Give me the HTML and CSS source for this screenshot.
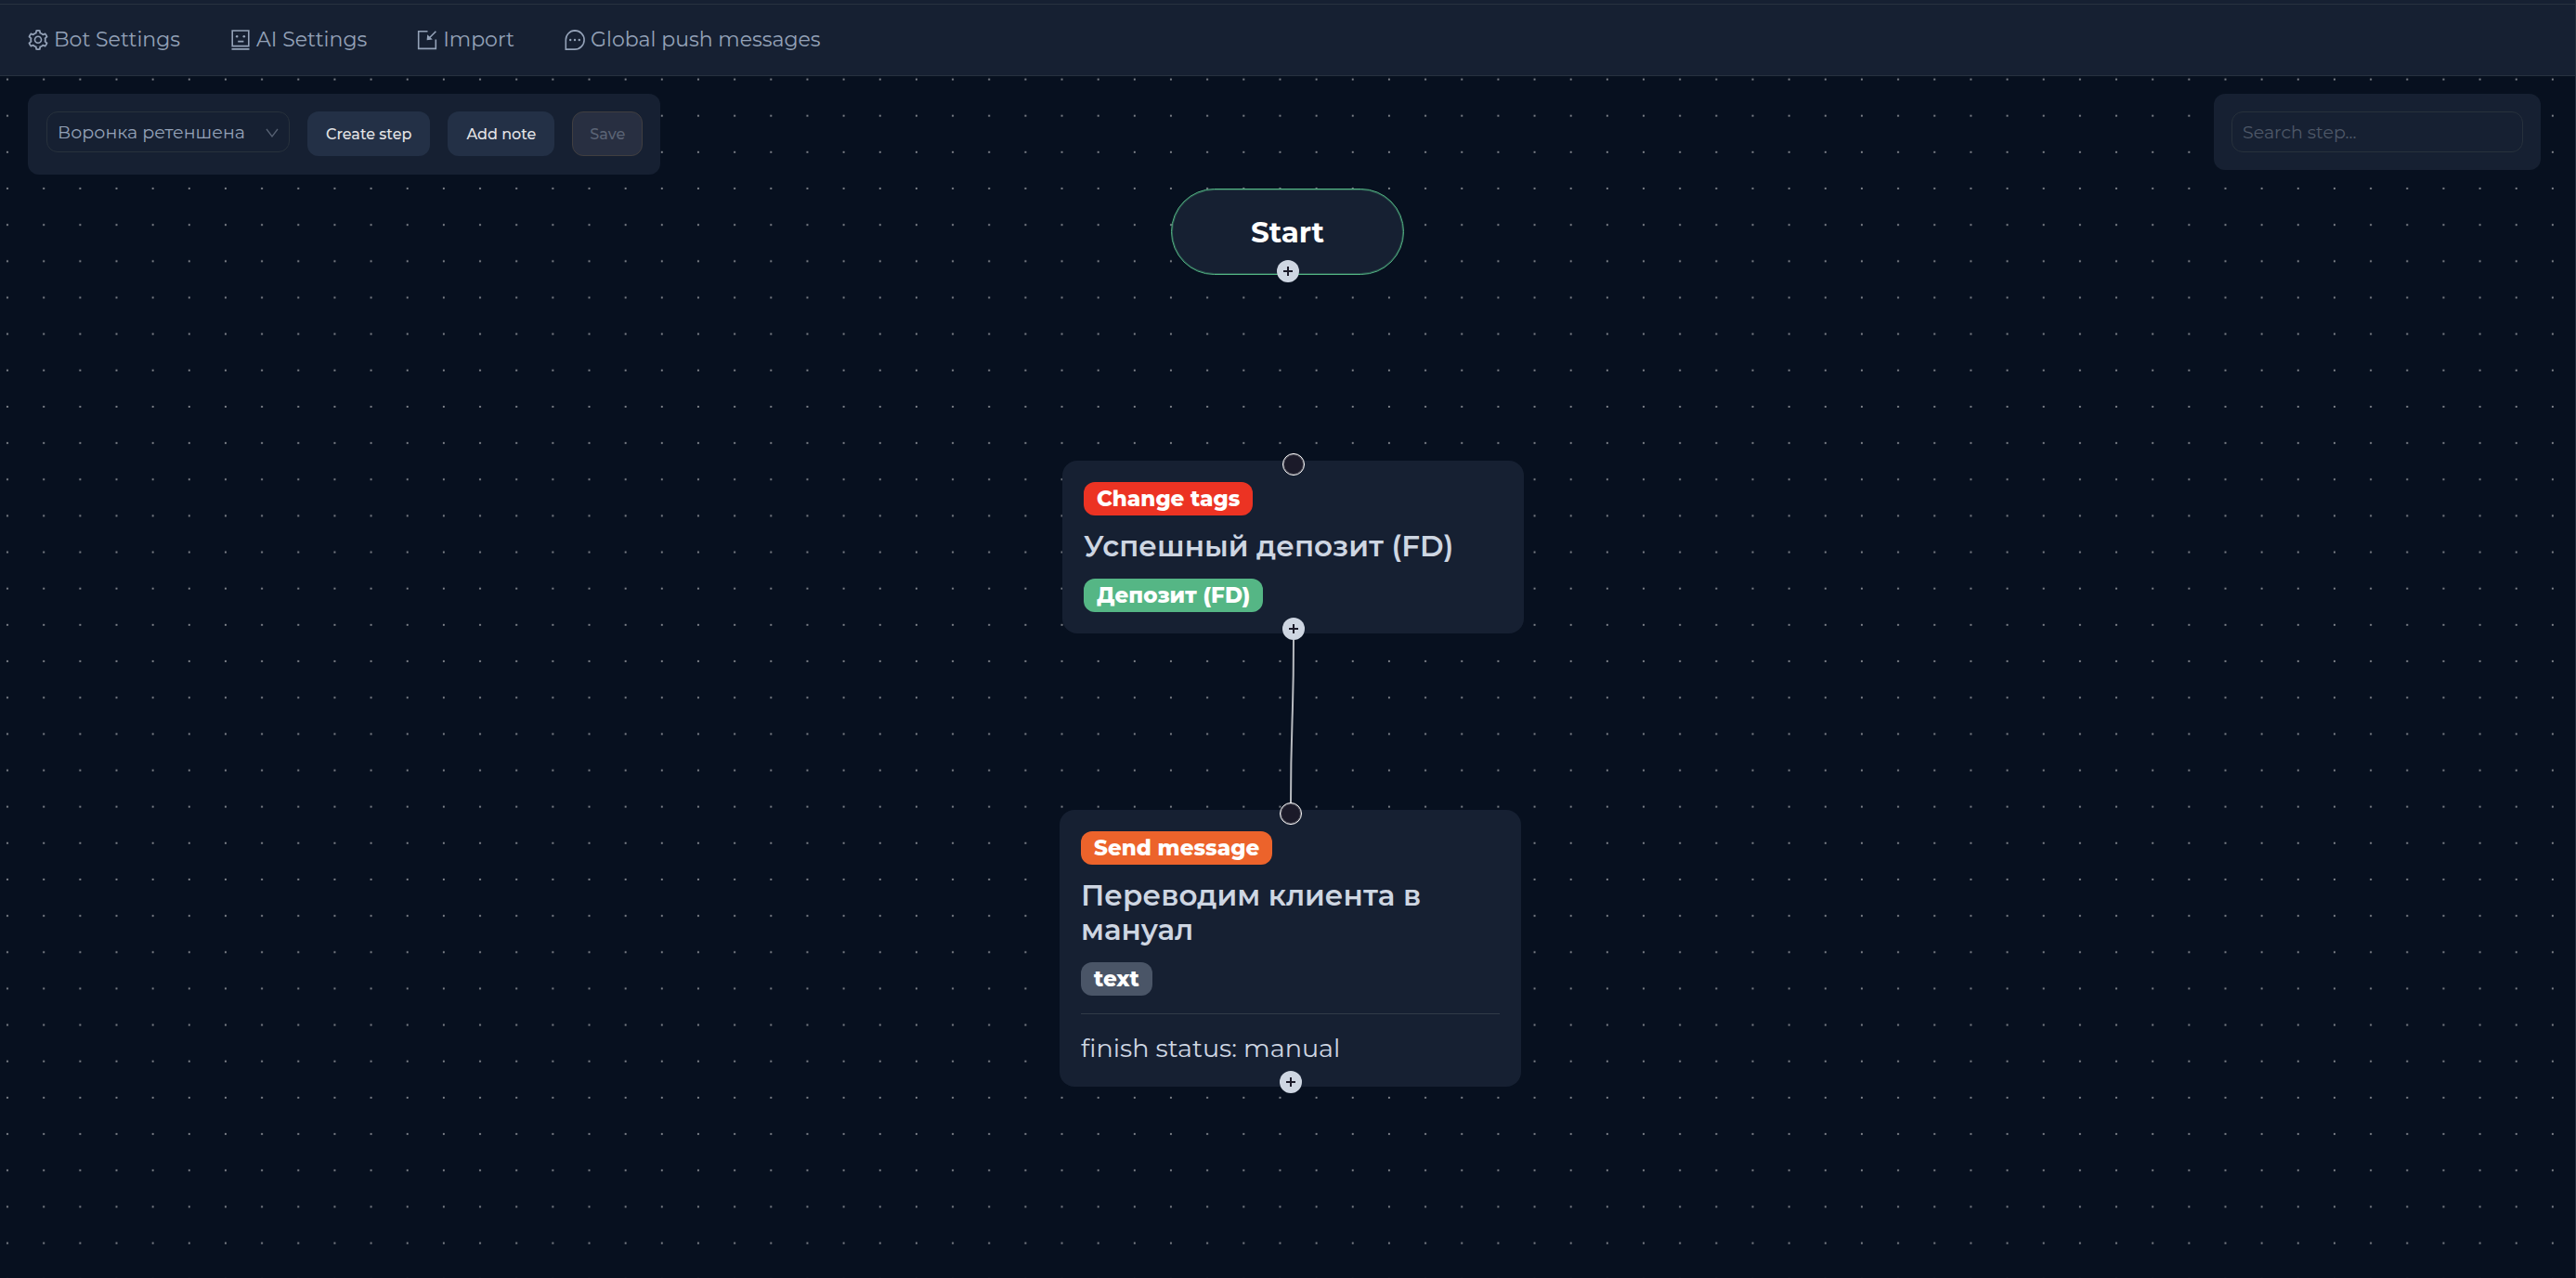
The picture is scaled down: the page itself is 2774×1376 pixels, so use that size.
FILE: index.html
```html
<!DOCTYPE html>
<html lang="en">
<head>
<meta charset="utf-8">
<title>Funnel editor</title>
<link rel="stylesheet" href="styles.css">
</head>
<body>
<div class="app">
  <header class="topbar">
    <nav class="nav" aria-label="Main">
      <a class="nav-link" href="#bot">
        <svg class="icon" viewBox="64 64 896 896" aria-hidden="true"><path fill="currentColor" d="M924.8 625.7l-65.5-56c3.1-19 4.7-38.4 4.7-57.8s-1.6-38.8-4.7-57.8l65.5-56a32.03 32.03 0 009.3-35.2l-.9-2.6a443.74 443.74 0 00-79.7-137.9l-1.8-2.1a32.12 32.12 0 00-35.1-9.5l-81.3 28.9c-30-24.6-63.5-44-99.7-57.6l-15.7-85a32.05 32.05 0 00-25.8-25.7l-2.7-.5c-52.1-9.4-106.9-9.4-159 0l-2.7.5a32.05 32.05 0 00-25.8 25.7l-15.8 85.4a351.86 351.86 0 00-99 57.4l-81.9-29.1a32 32 0 00-35.1 9.5l-1.8 2.1a446.02 446.02 0 00-79.7 137.9l-.9 2.6c-4.5 12.5-.8 26.5 9.3 35.2l66.3 56.6c-3.1 18.8-4.6 38-4.6 57.1 0 19.2 1.5 38.4 4.6 57.1L99 625.5a32.03 32.03 0 00-9.3 35.2l.9 2.6c18.1 50.4 44.9 96.9 79.7 137.9l1.8 2.1a32.12 32.12 0 0035.1 9.5l81.9-29.1c29.8 24.5 63.1 43.9 99 57.4l15.8 85.4a32.05 32.05 0 0025.8 25.7l2.7.5a449.4 449.4 0 00159 0l2.7-.5a32.05 32.05 0 0025.8-25.7l15.7-85a350 350 0 0099.7-57.6l81.3 28.9a32 32 0 0035.1-9.5l1.8-2.1c34.8-41.1 61.6-87.5 79.7-137.9l.9-2.6c4.5-12.3.8-26.3-9.3-35zM788.3 465.9c2.5 15.1 3.8 30.6 3.8 46.1s-1.3 31-3.8 46.1l-6.6 40.1 74.7 63.9a370.03 370.03 0 01-42.6 73.6L721 702.8l-31.4 25.8c-23.9 19.6-50.5 35-79.3 45.8l-38.1 14.3-17.9 97a377.5 377.5 0 01-85 0l-17.9-97.2-37.8-14.5c-28.5-10.8-55-26.2-78.7-45.7l-31.4-25.9-93.4 33.2c-17-22.9-31.2-47.6-42.6-73.6l75.5-64.5-6.5-40c-2.4-14.9-3.7-30.3-3.7-45.5 0-15.3 1.2-30.6 3.7-45.5l6.5-40-75.5-64.5c11.3-26.1 25.6-50.7 42.6-73.6l93.4 33.2 31.4-25.9c23.7-19.5 50.2-34.9 78.7-45.7l37.9-14.3 17.9-97.2c28.1-3.2 56.8-3.2 85 0l17.9 97 38.1 14.3c28.7 10.8 55.4 26.2 79.3 45.8l31.4 25.8 92.8-32.9c17 22.9 31.2 47.6 42.6 73.6L781.8 426l6.5 39.9zM512 326c-97.2 0-176 78.8-176 176s78.8 176 176 176 176-78.8 176-176-78.8-176-176-176zm79.2 255.2A111.6 111.6 0 01512 614c-29.9 0-58-11.7-79.2-32.8A111.6 111.6 0 01400 502c0-29.9 11.7-58 32.8-79.2C454 401.6 482.1 390 512 390c29.9 0 58 11.6 79.2 32.8A111.6 111.6 0 01624 502c0 29.9-11.7 58-32.8 79.2z"/></svg>
        <span>Bot Settings</span>
      </a>
      <a class="nav-link" href="#ai">
        <svg class="icon" viewBox="0 0 22 22" aria-hidden="true"><path d="M2.2 1h17.6v16.6H2.2zM1.5 20.9h19M8.2 12.6h6.2" fill="none" stroke="currentColor" stroke-width="1.6"/><circle cx="7.2" cy="7.3" r="1.3" fill="currentColor"/><circle cx="14.8" cy="7.3" r="1.3" fill="currentColor"/></svg>
        <span>AI Settings</span>
      </a>
      <a class="nav-link" href="#import">
        <svg class="icon" viewBox="0 0 22 22" aria-hidden="true"><path d="M11.5 1.8H1.7v18.6h18.6v-9.8M20.4 1.8l-7 7" fill="none" stroke="currentColor" stroke-width="1.6"/><path d="M11.2 5.2l5.6 5.4-6.2.7z" fill="currentColor"/></svg>
        <span>Import</span>
      </a>
      <a class="nav-link" href="#push">
        <svg class="icon" viewBox="0 0 22 22" aria-hidden="true"><path d="M11 .9a10 10 0 1 1 0 20.2H1.3V11A9.9 9.9 0 0 1 11 .9z" fill="none" stroke="currentColor" stroke-width="1.6"/><g fill="currentColor"><circle cx="6.2" cy="11" r="1.2"/><circle cx="11" cy="11" r="1.2"/><circle cx="15.8" cy="11" r="1.2"/></g></svg>
        <span>Global push messages</span>
      </a>
    </nav>
  </header>

  <main class="board">
    <svg class="dots" aria-hidden="true">
      <defs><pattern id="grid" x="-11.5" y="-16" width="39.155" height="39.155" patternUnits="userSpaceOnUse"><circle cx="19.5" cy="19.5" r="1.1"/></pattern></defs>
      <rect width="100%" height="100%" fill="url(#grid)"/>
    </svg>

    <div class="panels">
      <div class="panel toolbar">
        <div class="picker">
          <select class="field select" aria-label="Funnel"><option>Воронка ретеншена</option></select>
          <svg class="chevron" viewBox="0 0 14 10" aria-hidden="true"><path d="M1 1l6 8 6-8" fill="none" stroke="currentColor" stroke-width="1.3"/></svg>
        </div>
        <button class="btn" type="button">Create step</button>
        <button class="btn" type="button">Add note</button>
        <button class="btn btn-save" type="button" disabled>Save</button>
      </div>
      <div class="panel">
        <input class="field search" type="search" placeholder="Search step..." aria-label="Search step">
      </div>
    </div>

    <div class="flow">
      <svg class="edges" viewBox="0 0 520 1000" aria-hidden="true"><path d="M253 607C253 695 250 695 250 783"/></svg>

      <section class="node start">
        <h2 class="start-title">Start</h2>
        <button class="port port-out" type="button" aria-label="Add step after Start"></button>
      </section>

      <section class="node card deposit">
        <i class="port port-in"></i>
        <span class="tag tag-red">Change tags</span>
        <h3 class="title">Успешный депозит (FD)</h3>
        <span class="tag tag-green">Депозит (FD)</span>
        <button class="port port-out" type="button" aria-label="Add next step"></button>
      </section>

      <section class="node card message">
        <i class="port port-in"></i>
        <span class="tag tag-orange">Send message</span>
        <h3 class="title">Переводим клиента в мануал</h3>
        <span class="tag tag-gray">text</span>
        <p class="status">finish status: manual</p>
        <button class="port port-out" type="button" aria-label="Add next step"></button>
      </section>
    </div>
  </main>
</div>
</body>
</html>
```
FILE: styles.css
```css
* { box-sizing: border-box; }

body {
  margin: 0;
  background: #07101f;
  color: #ced6e2;
  font-family: Montserrat, Inter, "Noto Sans", sans-serif;
}

button, input, select { font: inherit; }

.app {
  position: relative;
  display: flex;
  flex-direction: column;
  min-height: 100vh;
}

/* Hairline along the right edge of the window */
.app::after {
  content: "";
  position: absolute;
  inset: 0 0 0 auto;
  width: 1px;
  background: #27313f;
}

.topbar {
  padding-top: 4px;
  background: #162032;
  border-bottom: 1px solid #27313f;
}

.nav {
  display: flex;
  gap: 54px;
  height: 77px;
  padding: 0 30px;
  border-top: 1px solid #27313f;
}

.nav-link {
  display: flex;
  align-items: center;
  gap: 6px;
  color: #94a2b8;
  font-size: 22px;
  line-height: 32px;
  text-decoration: none;
}

.icon {
  width: 22px;
  height: 22px;
}

.board {
  position: relative;
  flex: 1;
  overflow: hidden;
}

.dots {
  position: absolute;
  inset: 0;
  width: 100%;
  height: 100%;
  fill: #84888f;
}

.panels {
  position: relative;
  display: flex;
  justify-content: space-between;
  align-items: flex-start;
  padding: 19px 38px 0 30px;
}

.panel {
  display: flex;
  align-items: flex-start;
  gap: 19px;
  padding: 19px;
  border-radius: 12px;
  background: #162032;
}

.toolbar {
  padding-bottom: 20px;
  padding-left: 20px;
}

.field {
  height: 44px;
  padding: 0 11px;
  border: 1px solid #27313c;
  border-radius: 12px;
  background: transparent;
  color: #94a2b8;
  font-size: 19px;
  outline: none;
}

.picker { position: relative; }

.select {
  appearance: none;
  width: 262px;
}

.chevron {
  position: absolute;
  top: 18px;
  right: 12px;
  width: 14px;
  height: 10px;
  color: #566173;
  pointer-events: none;
}

.search {
  appearance: none;
  width: 314px;
}

.search::placeholder { color: #4e5868; opacity: 1; }

.btn {
  height: 48px;
  padding: 0 20px;
  border: 0;
  border-radius: 12px;
  background: #233046;
  color: #e3e4e6;
  font-size: 16px;
  font-weight: 500;
}

.btn-save {
  padding: 0 18px;
  border: 1px solid #403e40;
  background: #282f41;
  color: #5b6475;
}

/* Canvas with freely placed nodes */
.flow {
  position: absolute;
  top: 0;
  left: calc(50% - 247px);
  width: 520px;
  height: 1000px;
}

.edges {
  position: absolute;
  inset: 0;
  width: 520px;
  height: 1000px;
  fill: none;
  stroke: #b8bbc0;
  stroke-width: 2;
}

.node { position: absolute; background: #162032; }

.start {
  top: 121px;
  left: 121px;
  display: grid;
  place-items: center;
  width: 251px;
  height: 93px;
  border: 1px solid #53b584;
  border-radius: 47px;
  box-shadow: inset 0 0 0 1px rgba(83, 181, 132, .35);
}

.start-title {
  margin: 0;
  color: #fff;
  font-size: 31px;
  line-height: 40px;
}

.card {
  display: flex;
  flex-direction: column;
  align-items: flex-start;
  width: 497px;
  padding: 23px;
  border-radius: 16px;
}

.deposit { top: 414px; left: 4px; }
.message { top: 790px; left: 1px; }

.tag {
  padding: 0 14px;
  border-radius: 12px;
  color: #fff;
  font-size: 23px;
  font-weight: 800;
  line-height: 36px;
}

.tag-red { background: #ec3323; }
.tag-green { background: #55b685; }
.tag-orange { background: #ec632b; }
.tag-gray { background: #4a5567; }

.title {
  margin: 15px 0 16px;
  font-size: 31px;
  font-weight: 600;
  line-height: 37px;
}

.status {
  align-self: stretch;
  margin: 19px 0 0;
  padding-top: 19px;
  border-top: 1px solid #303a48;
  font-size: 27px;
  line-height: 36px;
}

.port {
  position: absolute;
  left: 50%;
  width: 24px;
  height: 24px;
  padding: 0;
  border: 0;
  border-radius: 50%;
  transform: translateX(-50%);
}

.port-in {
  top: -8px;
  border: 1px solid #fff;
  background: #1b1a29;
  box-shadow: inset 0 0 0 1px rgba(255, 255, 255, .25);
}

.port-out {
  bottom: -7px;
  background:
    linear-gradient(#1b1a29, #1b1a29) center / 10px 2px no-repeat,
    linear-gradient(#1b1a29, #1b1a29) center / 2px 10px no-repeat,
    #ced6e2;
}

.start .port-out { bottom: -9px; }
```
